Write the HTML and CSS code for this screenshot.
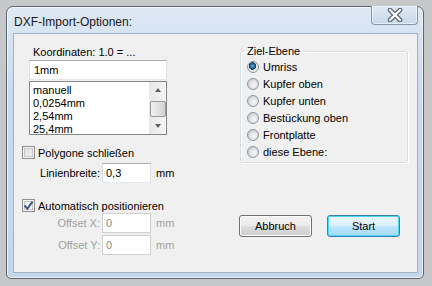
FILE: index.html
```html
<!DOCTYPE html>
<html lang="de">
<head>
    <meta charset="UTF-8">
    <title>DXF-Import-Optionen</title>
    <link rel="stylesheet" href="styles.css">
</head>
<body>

<div class="window">
    <div class="titlebar">
        <span class="title">DXF-Import-Optionen:</span>
        <div class="close-btn">
            <svg width="16" height="14" viewBox="0 0 16 14">
                <path d="M3 2 L13 12 M13 2 L3 12" stroke="#5c6677" stroke-width="4.6" stroke-linecap="round"/>
                <path d="M3 2 L13 12 M13 2 L3 12" stroke="#ffffff" stroke-width="2.4" stroke-linecap="round"/>
            </svg>
        </div>
    </div>

    <div class="client">
        <div class="col-left">
            <div class="caption">Koordinaten: 1.0 = ...</div>
            <div class="textbox wide">1mm</div>
            <div class="listbox">
                <ul class="items">
                    <li>manuell</li>
                    <li>0,0254mm</li>
                    <li>2,54mm</li>
                    <li>25,4mm</li>
                </ul>
                <div class="scrollbar">
                    <div class="sb-btn"><span class="arrow-up"></span></div>
                    <div class="sb-thumb"></div>
                    <div class="sb-btn sb-down"><span class="arrow-down"></span></div>
                </div>
            </div>

            <div class="check-row first">
                <span class="checkbox"></span>
                <span>Polygone schließen</span>
            </div>
            <div class="field-row">
                <span class="field-label">Linienbreite:</span>
                <span class="textbox small">0,3</span>
                <span class="unit">mm</span>
            </div>

            <div class="check-row second">
                <span class="checkbox checked">
                    <svg width="11" height="11" viewBox="0 0 11 11">
                        <path d="M1.5 5.5 L4.3 8.6 L9.6 1.6" fill="none" stroke="#40578a" stroke-width="2"/>
                    </svg>
                </span>
                <span>Automatisch positionieren</span>
            </div>
            <div class="field-row disabled offset-x">
                <span class="field-label">Offset X:</span>
                <span class="textbox small">0</span>
                <span class="unit">mm</span>
            </div>
            <div class="field-row disabled offset-y">
                <span class="field-label">Offset Y:</span>
                <span class="textbox small">0</span>
                <span class="unit">mm</span>
            </div>
        </div>

        <div class="col-right">
            <fieldset class="group">
                <legend>Ziel-Ebene</legend>
                <div class="radio-row"><span class="radio selected"></span>Umriss</div>
                <div class="radio-row"><span class="radio"></span>Kupfer oben</div>
                <div class="radio-row"><span class="radio"></span>Kupfer unten</div>
                <div class="radio-row"><span class="radio"></span>Bestückung oben</div>
                <div class="radio-row"><span class="radio"></span>Frontplatte</div>
                <div class="radio-row"><span class="radio"></span>diese Ebene:</div>
            </fieldset>

            <div class="buttons">
                <div class="btn">Abbruch</div>
                <div class="btn default">Start</div>
            </div>
        </div>
    </div>
</div>

</body>
</html>
```

FILE: styles.css
```css
body {
    margin: 0;
    padding: 6px 0 0 6px;
    background-color: #c6c7c9;
    font-family: "Liberation Sans", Arial, sans-serif;
    font-size: 11px;
    color: #000;
}

.window {
    box-sizing: border-box;
    width: 418px;
    height: 273px;
    border: 1px solid #5d6470;
    border-radius: 7px 7px 5px 5px;
    background: linear-gradient(#dde8f4, #c9dbee 30%, #c3d6ea);
    box-shadow: inset 0 0 0 1px rgba(255, 255, 255, 0.6);
    padding: 0 5px 5px 6px;
    display: flex;
    flex-direction: column;
}

.titlebar {
    height: 26px;
    display: flex;
    justify-content: space-between;
    align-items: flex-start;
}

.title {
    font-size: 12px;
    margin-top: 8px;
    margin-left: 1px;
    color: #1a1a1a;
}

.close-btn {
    box-sizing: border-box;
    width: 47px;
    height: 19px;
    margin-top: -1px;
    border: 1px solid #8796ab;
    border-top: none;
    border-radius: 0 0 4px 4px;
    background: linear-gradient(#dfe9f5, #c7d8ea);
    box-shadow: inset 0 0 0 1px rgba(255, 255, 255, 0.5);
    display: flex;
    justify-content: center;
    align-items: center;
}

.client {
    flex: 1;
    border: 1px solid #9fb2c7;
    background-color: #f0f0f0;
    display: flex;
}

.col-left {
    width: 218px;
    padding: 12px 0 0 8px;
    display: flex;
    flex-direction: column;
    align-items: flex-start;
}

.caption {
    margin-left: 11px;
    line-height: 13px;
}

.textbox {
    box-sizing: border-box;
    height: 20px;
    line-height: 18px;
    padding-left: 3px;
    background-color: #fff;
    border: 1px solid #dbdfe6;
    border-top-color: #abadb3;
    border-bottom-color: #e3e9ef;
}

.textbox.wide {
    width: 138px;
    margin: 1px 0 0 7px;
    padding-left: 4px;
}

.textbox.small {
    width: 49px;
}

.listbox {
    box-sizing: border-box;
    width: 138px;
    height: 54px;
    margin: 1px 0 0 7px;
    border: 1px solid #828790;
    background-color: #fff;
    display: flex;
}

.items {
    flex: 1;
    list-style: none;
    margin: 0;
    padding: 2px 0 0 3px;
}

.items li {
    line-height: 13px;
}

.scrollbar {
    width: 17px;
    background: linear-gradient(to right, #e8e8e8, #f5f5f5);
    display: flex;
    flex-direction: column;
}

.sb-btn {
    height: 17px;
    display: flex;
    justify-content: center;
    align-items: center;
}

.sb-down {
    margin-top: auto;
}

.arrow-up,
.arrow-down {
    width: 0;
    height: 0;
    border-left: 3px solid transparent;
    border-right: 3px solid transparent;
}

.arrow-up {
    border-bottom: 4px solid #606060;
}

.arrow-down {
    border-top: 4px solid #606060;
}

.sb-thumb {
    box-sizing: border-box;
    height: 17px;
    margin: 2px 0 0 1px;
    width: 16px;
    border: 1px solid #979797;
    border-radius: 2px;
    background: linear-gradient(to right, #f2f2f2, #e2e2e2 50%, #d2d2d2);
}

.check-row {
    display: flex;
    align-items: center;
    height: 13px;
    gap: 3px;
}

.check-row.first {
    margin-top: 11px;
}

.check-row.second {
    margin-top: 16px;
}

.checkbox {
    box-sizing: border-box;
    width: 13px;
    height: 13px;
    border: 1px solid #8e8f8f;
    background: linear-gradient(135deg, #dcdcdc, #f6f6f6);
    box-shadow: inset 0 0 0 1px #f4f4f4, inset 0 0 0 2px #c8c8c8;
    display: flex;
    justify-content: center;
    align-items: center;
}

.checkbox.checked {
    background: linear-gradient(135deg, #e6eaf1, #ffffff);
}

.field-row {
    display: flex;
    align-items: center;
    margin-top: 4px;
}

.field-row.offset-x {
    margin-top: 1px;
}

.field-row.offset-y {
    margin-top: 2px;
}

.field-label {
    width: 78px;
    padding-right: 2px;
    text-align: right;
}

.unit {
    margin-left: 5px;
}

.disabled {
    color: #a0a0a0;
}

.disabled .textbox {
    border-color: #d0d0d0;
    color: #8c8c8c;
}

.col-right {
    width: 168px;
    padding-top: 11px;
    display: flex;
    flex-direction: column;
}

.group {
    margin: 0;
    padding: 0 0 2px 6px;
    border: 1px solid #d5dfe5;
    border-radius: 3px;
    box-shadow: inset 1px 1px 0 #fff, 1px 1px 0 #fff;
}

.group legend {
    padding: 0 2px;
    margin-left: -2px;
    line-height: 13px;
}

.radio-row {
    height: 17px;
    display: flex;
    align-items: center;
    gap: 4px;
}

.radio {
    box-sizing: border-box;
    width: 12px;
    height: 12px;
    border-radius: 50%;
    border: 1px solid #8f959c;
    background: radial-gradient(circle at 60% 60%, #f8f8f8 0, #e2e2e2 45%, #c8c8c8 80%);
}

.radio.selected {
    background: radial-gradient(circle at 45% 40%, #6fb1d9 0, #1f5d8c 2.5px, #0d3d63 3.5px, #e4e4e4 4px, #f2f2f2 100%);
}

.buttons {
    display: flex;
    gap: 15px;
    margin: 52px 0 0 -1px;
}

.btn {
    box-sizing: border-box;
    width: 73px;
    height: 22px;
    line-height: 20px;
    text-align: center;
    border: 1px solid #707070;
    border-radius: 3px;
    background: linear-gradient(#f2f2f2, #ebebeb 50%, #dddddd 50%, #cfcfcf);
    box-shadow: inset 0 0 0 1px #fcfcfc;
}

.btn.default {
    border-color: #3c7fb1;
    background: linear-gradient(#eaf6fd, #d9f0fc 50%, #bee6fd 50%, #a7d9f5);
    box-shadow: inset 0 0 0 1px #48d8fb;
}
```
